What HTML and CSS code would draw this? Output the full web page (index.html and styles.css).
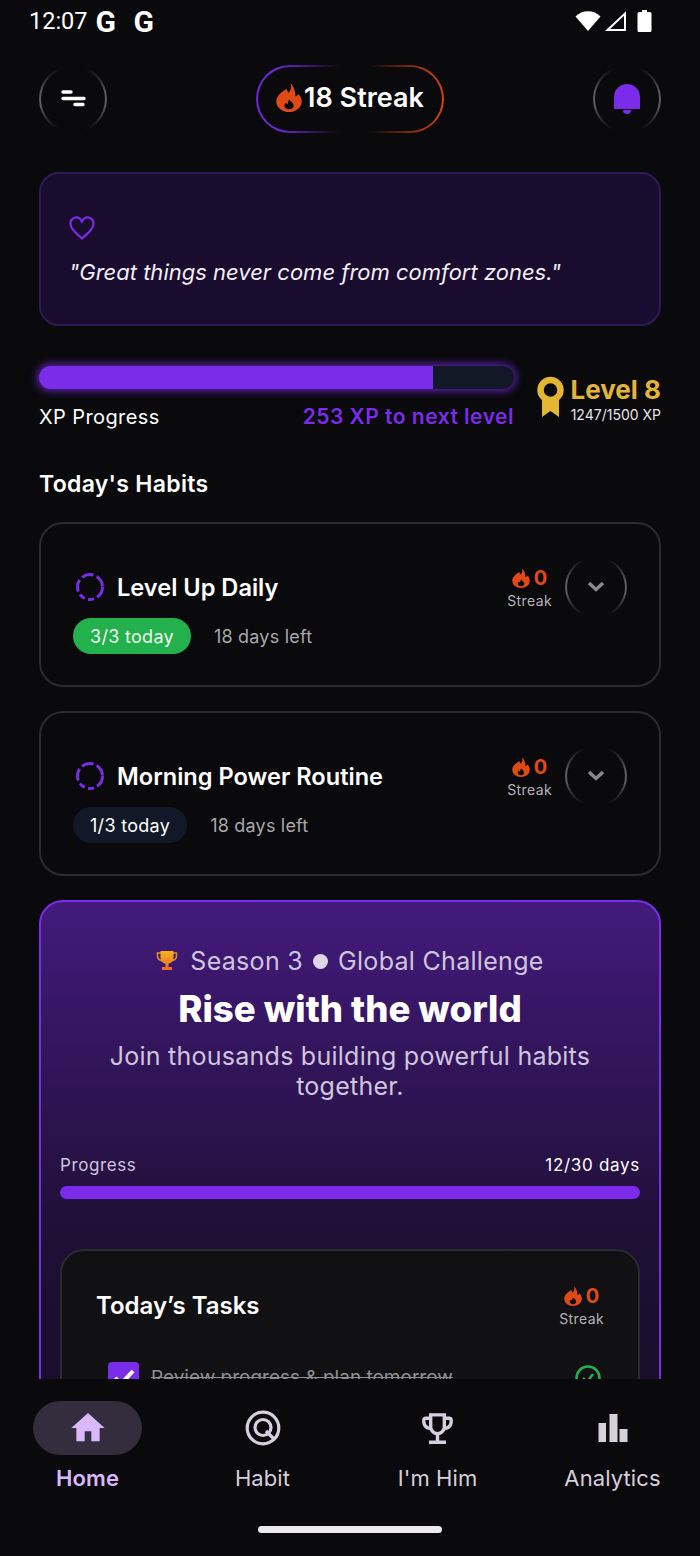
FILE: index.html
```html
<!DOCTYPE html>
<html lang="en">
<head>
  <meta charset="UTF-8">
  <title>Habits Home</title>
  <link rel="stylesheet" href="styles.css">
</head>
<body>
  <svg class="defs" width="0" height="0" aria-hidden="true">
    <symbol id="flame" viewBox="3 0 18 24" preserveAspectRatio="none">
      <path fill="#e04a16" d="M13 .3c1 3.200.3 5.700-1.200 7.700-.8-1-1.300-1.800-1.500-3.200C6.800 7.500 3.200 11 3.200 15.300a8.800 8.700 0 0 0 17.600 0c0-2.600-1-4.800-2.300-6.300-.4 1-1 1.700-2 2.100C16.300 7 15.500 3 13 .3z"/>
      <path fill="#0a090c" d="M12.300 13.700c.4 1.500 2.900 2.300 2.900 5.200 0 1.800-1.400 2.900-3.200 2.900s-3.200-1.100-3.200-2.900c0-1.100.5-2 1.200-2.600.2.700.5 1 1.100 1.200.3-1.200 0-2.500 1.200-3.800z"/>
    </symbol>
  </svg>

  <div class="app">
    <div class="status-bar">
      <span class="clock">12:07</span>
      <span class="status-g">G</span>
      <span class="status-g">G</span>
      <span class="status-icons">
        <svg width="26" height="22" viewBox="0 0 26 22"><path fill="#fff" d="M.5 6.500C4 3.200 8.300 1.300 13 1.300s9 1.900 12.500 5.200L13 21z"/></svg>
        <svg width="23" height="22" viewBox="0 0 23 22"><path fill="none" stroke="#fff" stroke-width="2" d="M21 3.500V20H3.500z"/></svg>
        <svg class="battery" width="15" height="22" viewBox="0 0 15 22"><path fill="#fff" d="M5 0h5v2h3a1.500 1.500 0 0 1 1.500 1.500v17A1.500 1.500 0 0 1 13 22H2A1.500 1.500 0 0 1 .5 20.500v-17A1.500 1.500 0 0 1 2 2h3z"/></svg>
      </span>
    </div>

    <main class="content">
      <header class="top-bar">
        <div class="ring-btn">
          <span class="ring-inner">
            <svg width="26" height="20" viewBox="0 0 26 20"><path stroke="#fff" stroke-width="3.400" stroke-linecap="round" d="M3 3h8M3 9.500h21M15 15.500h8"/></svg>
          </span>
        </div>
        <div class="streak-pill">
          <span class="streak-inner">
            <svg class="streak-flame" width="26" height="29"><use href="#flame"/></svg>
            18 Streak
          </span>
        </div>
        <div class="ring-btn">
          <span class="ring-inner">
            <svg width="28" height="32" viewBox="0 0 28 32"><path fill="#7b2cea" d="M1 26V14a13 13 0 0 1 26 0v12z"/><path fill="#7b2cea" d="M10 27h8a4 4 0 0 1-8 0z"/></svg>
          </span>
        </div>
      </header>

      <section class="quote-card">
        <svg width="26" height="24" viewBox="0 0 24 22"><path fill="none" stroke="#7b2cea" stroke-width="2" stroke-linejoin="round" d="M12 20.500C5 15 1.500 11.500 1.500 7.500A5.300 5.300 0 0 1 12 5.500a5.300 5.300 0 0 1 10.500 2c0 4-3.500 7.500-10.500 13z"/></svg>
        <p class="quote-text">"Great things never come from comfort zones."</p>
      </section>

      <section class="xp-row">
        <div class="xp-left">
          <div class="xp-track"><div class="xp-fill" style="width: 83%"></div></div>
          <div class="xp-labels">
            <span class="xp-label">XP Progress</span>
            <span class="xp-next">253 XP to next level</span>
          </div>
        </div>
        <div class="level">
          <svg width="27" height="42" viewBox="0 0 27 42"><path fill="#e2b632" d="M5 24h17v17l-8.500-6L5 41z"/><circle cx="13.500" cy="14" r="10" fill="none" stroke="#e2b632" stroke-width="6.500"/></svg>
          <div class="level-text">
            <span class="level-name">Level 8</span>
            <span class="level-xp">1247/1500 XP</span>
          </div>
        </div>
      </section>

      <h2 class="section-title">Today's Habits</h2>

      <article class="habit-card">
        <div class="habit-top">
          <svg class="habit-ring" width="30" height="30" viewBox="0 0 30 30"><circle cx="15" cy="15" r="12.500" fill="none" stroke="#7b2cea" stroke-width="3" stroke-dasharray="12 3.500 6 3.500 6 3.500 12 3.500 12 3.500"/></svg>
          <h3 class="habit-name">Level Up Daily</h3>
          <div class="streak-mini">
            <span class="streak-count"><svg width="18" height="20"><use href="#flame"/></svg>0</span>
            <span class="streak-word">Streak</span>
          </div>
          <div class="ring-btn ring-small">
            <span class="ring-inner">
              <svg width="18" height="12" viewBox="0 0 18 12"><path fill="none" stroke="#8a8a8d" stroke-width="3.400" d="M2 2l7 6.500L16 2"/></svg>
            </span>
          </div>
        </div>
        <div class="habit-meta">
          <span class="chip chip-done">3/3 today</span>
          <span class="days-left">18 days left</span>
        </div>
      </article>

      <article class="habit-card">
        <div class="habit-top">
          <svg class="habit-ring" width="30" height="30" viewBox="0 0 30 30"><circle cx="15" cy="15" r="12.500" fill="none" stroke="#7b2cea" stroke-width="3" stroke-dasharray="12 3.500 6 3.500 6 3.500 12 3.500 12 3.500"/></svg>
          <h3 class="habit-name">Morning Power Routine</h3>
          <div class="streak-mini">
            <span class="streak-count"><svg width="18" height="20"><use href="#flame"/></svg>0</span>
            <span class="streak-word">Streak</span>
          </div>
          <div class="ring-btn ring-small">
            <span class="ring-inner">
              <svg width="18" height="12" viewBox="0 0 18 12"><path fill="none" stroke="#8a8a8d" stroke-width="3.400" d="M2 2l7 6.500L16 2"/></svg>
            </span>
          </div>
        </div>
        <div class="habit-meta">
          <span class="chip chip-open">1/3 today</span>
          <span class="days-left">18 days left</span>
        </div>
      </article>

      <section class="challenge">
        <div class="season">
          <svg width="22" height="22" viewBox="0 0 22 22">
            <defs><linearGradient id="cup" x1="0" y1="0" x2="0" y2="1"><stop offset="0" stop-color="#f7b21a"/><stop offset="1" stop-color="#f0682a"/></linearGradient></defs>
            <path fill="none" stroke="#d9901f" stroke-width="1.600" d="M5 3H1.500v3c0 2.500 1.500 4 4.500 4.500M17 3h3.500v3c0 2.500-1.500 4-4.500 4.500"/>
            <path fill="url(#cup)" d="M4.500 1h13v6.500a6.500 6.500 0 0 1-5 6.300V17H16v3H6v-3h3.500v-3.200a6.500 6.500 0 0 1-5-6.300z"/>
          </svg>
          <span class="season-text">Season 3</span>
          <span class="season-dot"></span>
          <span class="season-text">Global Challenge</span>
        </div>
        <h2 class="challenge-title">Rise with the world</h2>
        <p class="challenge-sub">Join thousands building powerful habits together.</p>

        <div class="progress-head">
          <span class="progress-label">Progress</span>
          <span class="progress-days">12/30 days</span>
        </div>
        <div class="progress-track"></div>

        <div class="tasks-card">
          <div class="tasks-head">
            <h3 class="tasks-title">Today’s Tasks</h3>
            <div class="streak-mini">
              <span class="streak-count"><svg width="18" height="20"><use href="#flame"/></svg>0</span>
              <span class="streak-word">Streak</span>
            </div>
          </div>
          <div class="task-row">
            <span class="task-check">
              <svg width="24" height="20" viewBox="0 0 24 20"><path fill="none" stroke="#fff" stroke-width="4" d="M3 10l6 6L21 3"/></svg>
            </span>
            <span class="task-text">Review progress &amp; plan tomorrow</span>
            <svg class="task-done" width="26" height="26" viewBox="0 0 26 26"><circle cx="13" cy="13" r="11.500" fill="none" stroke="#22b14c" stroke-width="2.500"/><path fill="none" stroke="#22b14c" stroke-width="2.500" d="M8 13l4 4 6-8"/></svg>
          </div>
        </div>
      </section>
    </main>

    <nav class="bottom-nav">
      <a class="nav-item is-active">
        <span class="nav-icon">
          <svg width="40" height="40" viewBox="0 0 24 24"><path fill="#d9b8ff" d="M10 20v-6h4v6h5v-8h3L12 3 2 12h3v8z"/></svg>
        </span>
        <span class="nav-label">Home</span>
      </a>
      <a class="nav-item">
        <span class="nav-icon">
          <svg width="38" height="38" viewBox="0 0 38 38"><g fill="none" stroke="#d6cfdc" stroke-width="3.200"><circle cx="19" cy="19" r="15.800"/><circle cx="19" cy="18.500" r="8"/><path d="M22 22l8 8"/></g></svg>
        </span>
        <span class="nav-label">Habit</span>
      </a>
      <a class="nav-item">
        <span class="nav-icon">
          <svg width="41" height="41" viewBox="0 0 24 24"><path fill="#d6cfdc" d="M19 5h-2V3H7v2H5c-1.100 0-2 .9-2 2v1c0 2.550 1.920 4.630 4.390 4.940.63 1.500 1.980 2.630 3.610 2.960V19H7v2h10v-2h-4v-3.100c1.630-.33 2.980-1.460 3.610-2.960C19.080 12.630 21 10.550 21 8V7c0-1.100-.9-2-2-2zM5 8V7h2v3.820C5.840 10.400 5 9.300 5 8zm7 6c-1.650 0-3-1.350-3-3V5h6v6c0 1.650-1.350 3-3 3zm7-6c0 1.300-.84 2.400-2 2.820V7h2v1z"/></svg>
        </span>
        <span class="nav-label">I'm Him</span>
      </a>
      <a class="nav-item">
        <span class="nav-icon">
          <svg width="38" height="38" viewBox="0 0 38 38"><path fill="#d6cfdc" d="M4.500 14H12v19H4.500zM15.500 5h8v28h-8zM25.500 20h8v13h-8z"/></svg>
        </span>
        <span class="nav-label">Analytics</span>
      </a>
    </nav>
    <div class="home-bar"><span class="home-pill"></span></div>
  </div>
</body>
</html>
```

FILE: styles.css
```css
* {
  box-sizing: border-box;
}
html, body {
  margin: 0;
  background: #0a090c;
}
body {
  font-family: Inter, "Open Sans", sans-serif;
  color: #fff;
}
h2, h3, p {
  margin: 0;
}
.defs {
  position: absolute;
}
.app {
  width: 700px;
  height: 1556px;
  display: flex;
  flex-direction: column;
  overflow: hidden;
}

/* status bar */
.status-bar {
  height: 42px;
  flex: none;
  display: flex;
  align-items: center;
  padding: 0 48px 0 29px;
}
.clock {
  font-family: Roboto, sans-serif;
  font-size: 23.5px;
  margin-right: 8px;
}
.status-g {
  font-family: Roboto, sans-serif;
  font-weight: 700;
  font-size: 30px;
  width: 38px;
}
.status-icons {
  margin-left: auto;
  display: flex;
  align-items: center;
  gap: 3px;
}
.battery {
  margin-left: 7px;
}

/* scrolling part */
.content {
  flex: 1;
  min-height: 0;
  overflow: hidden;
  padding: 23px 39px 0;
}
.top-bar {
  display: flex;
  align-items: center;
  justify-content: space-between;
}
.ring-btn {
  width: 68px;
  height: 68px;
  padding: 2px;
  border-radius: 50%;
  background: linear-gradient(180deg, transparent 5%, #5c5c5e 40%, #5c5c5e 60%, transparent 95%);
}
.ring-inner {
  width: 100%;
  height: 100%;
  border-radius: 50%;
  background: #0a090c;
  display: flex;
  align-items: center;
  justify-content: center;
}
.ring-small {
  width: 62px;
  height: 62px;
}
.streak-pill {
  width: 188px;
  height: 68px;
  padding: 2px;
  border-radius: 34px;
  background: linear-gradient(90deg, #6d28d9 0%, #6d28d9 12%, #0a090c 45%, #0a090c 60%, #d9440f 100%);
}
.streak-inner {
  height: 100%;
  padding-bottom: 3px;
  border-radius: 32px;
  background: #0a090c;
  display: flex;
  align-items: center;
  justify-content: center;
  gap: 2px;
  font-size: 27px;
  font-weight: 600;
}
.quote-card {
  margin-top: 39px;
  height: 154px;
  padding: 42px 28px 0;
  background: #1a0c2e;
  border: 2px solid #2e1a57;
  border-radius: 20px;
}
.quote-card svg {
  display: block;
}
.quote-text {
  margin-top: 17px;
  font-size: 22px;
  font-style: italic;
  line-height: 30px;
  color: #f2eff6;
}

/* xp */
.xp-row {
  margin-top: 40px;
  display: flex;
  justify-content: space-between;
}
.xp-left {
  width: 475px;
}
.xp-track {
  height: 23px;
  border-radius: 12px;
  background: #111827;
  overflow: hidden;
  box-shadow: 0 0 8px 2px rgba(123, 44, 234, 0.75);
}
.xp-fill {
  height: 100%;
  background: #7b2cea;
}
.xp-labels {
  margin-top: 15px;
  display: flex;
  justify-content: space-between;
  align-items: center;
}
.xp-label {
  font-size: 20px;
  letter-spacing: 0.4px;
}
.xp-next {
  font-size: 21px;
  font-weight: 600;
  letter-spacing: 0.5px;
  color: #7b2cea;
}
.level {
  margin-top: 10px;
  display: flex;
  gap: 7px;
}
.level-text {
  display: flex;
  flex-direction: column;
  align-items: flex-end;
}
.level-name {
  font-size: 26px;
  font-weight: 700;
  line-height: 28px;
  color: #e2b632;
}
.level-xp {
  font-size: 14px;
  line-height: 22px;
  color: #e6e3ea;
}
.section-title {
  margin-top: 38px;
  font-size: 23px;
  font-weight: 600;
  line-height: 34px;
  letter-spacing: 0.3px;
}

/* habit cards */
.habit-card {
  margin-top: 21px;
  height: 165px;
  padding: 33px 32px 0 33px;
  border: 2px solid #2b2b2d;
  border-radius: 24px;
}
.habit-card + .habit-card {
  margin-top: 24px;
}
.habit-top {
  display: flex;
  align-items: center;
  height: 60px;
}
.habit-ring {
  margin-left: 1px;
}
.habit-name {
  margin-left: 12px;
  font-size: 23.6px;
  font-weight: 600;
  flex: 1;
}
.streak-mini {
  flex: none;
  display: flex;
  flex-direction: column;
  align-items: center;
  margin-right: 13px;
  padding-top: 2px;
}
.streak-count {
  display: flex;
  align-items: center;
  gap: 4px;
  font-size: 20px;
  font-weight: 700;
  line-height: 24px;
  color: #e04a16;
}
.streak-word {
  margin-top: 2px;
  font-size: 14px;
  line-height: 18px;
  letter-spacing: 0.4px;
  color: #b5b3b8;
}
.habit-meta {
  display: flex;
  align-items: center;
  gap: 23px;
  margin-top: 1px;
  margin-left: -1px;
}
.chip {
  height: 36px;
  padding: 0 17px;
  border-radius: 18px;
  display: flex;
  align-items: center;
  font-size: 18px;
  letter-spacing: 0.3px;
}
.chip-done {
  background: #22b14c;
  color: #f1fbf3;
}
.chip-open {
  background: #111827;
}
.days-left {
  font-size: 18px;
  letter-spacing: 0.2px;
  color: #a9a8ac;
}

/* challenge */
.challenge {
  margin-top: 24px;
  height: 700px;
  padding: 42px 19px 0;
  border: 2px solid #7b2cea;
  border-radius: 24px;
  background: linear-gradient(180deg, #431a7c 0%, #1f0f36 48%, #120a1e 100%);
  text-align: center;
}
.season {
  display: flex;
  align-items: center;
  justify-content: center;
  gap: 10px;
  height: 34px;
}
.season svg {
  margin-right: 2px;
}
.season-text {
  font-size: 25px;
  letter-spacing: 0.3px;
  color: #cfc5de;
}
.season-dot {
  width: 15px;
  height: 15px;
  border-radius: 50%;
  background: #ddd6e8;
}
.challenge-title {
  margin-top: 6px;
  font-size: 36.6px;
  font-weight: 800;
  line-height: 50px;
}
.challenge-sub {
  margin: 7px auto 0;
  width: 520px;
  font-size: 25px;
  line-height: 30px;
  letter-spacing: 0.25px;
  color: #cfc5de;
}
.progress-head {
  margin-top: 51px;
  display: flex;
  justify-content: space-between;
  font-size: 17px;
  line-height: 26px;
}
.progress-label {
  letter-spacing: 0.6px;
  color: #cfc5de;
}
.progress-days {
  letter-spacing: 0.7px;
}
.progress-track {
  margin-top: 8px;
  height: 13px;
  border-radius: 7px;
  background: #7b2cea;
}
.tasks-card {
  margin-top: 50px;
  height: 300px;
  padding: 31px 34px 0;
  background: #111013;
  border: 2px solid #2b2b2d;
  border-radius: 24px;
  text-align: left;
}
.tasks-head {
  display: flex;
  justify-content: space-between;
  align-items: center;
}
.tasks-head .streak-mini {
  margin-right: 0;
}
.tasks-title {
  font-size: 24px;
  font-weight: 600;
}
.task-row {
  margin-top: 34px;
  padding: 0 3px 0 12px;
  display: flex;
  align-items: center;
  gap: 12px;
}
.task-check {
  width: 31px;
  height: 31px;
  border-radius: 4px;
  background: #7b2cea;
  display: flex;
  align-items: center;
  justify-content: center;
}
.task-text {
  flex: 1;
  font-size: 19px;
  color: #8f8e92;
  text-decoration: line-through;
}

/* bottom nav */
.bottom-nav {
  flex: none;
  height: 135px;
  background: #0a090c;
  display: grid;
  grid-template-columns: repeat(4, 175px);
  padding-top: 22px;
}
.nav-item {
  display: flex;
  flex-direction: column;
  align-items: center;
}
.nav-icon {
  width: 109px;
  height: 54px;
  border-radius: 27px;
  display: flex;
  align-items: center;
  justify-content: center;
}
.is-active .nav-icon {
  background: #332d3e;
}
.nav-label {
  margin-top: 6px;
  font-size: 22px;
  line-height: 34px;
  letter-spacing: 0.1px;
  color: #d6cfdc;
}
.is-active .nav-label {
  font-weight: 600;
  color: #d9b8ff;
}
.home-bar {
  flex: none;
  height: 42px;
  display: flex;
  justify-content: center;
}
.home-pill {
  width: 184px;
  height: 7px;
  margin-top: 12px;
  border-radius: 4px;
  background: #eceaee;
}
```
